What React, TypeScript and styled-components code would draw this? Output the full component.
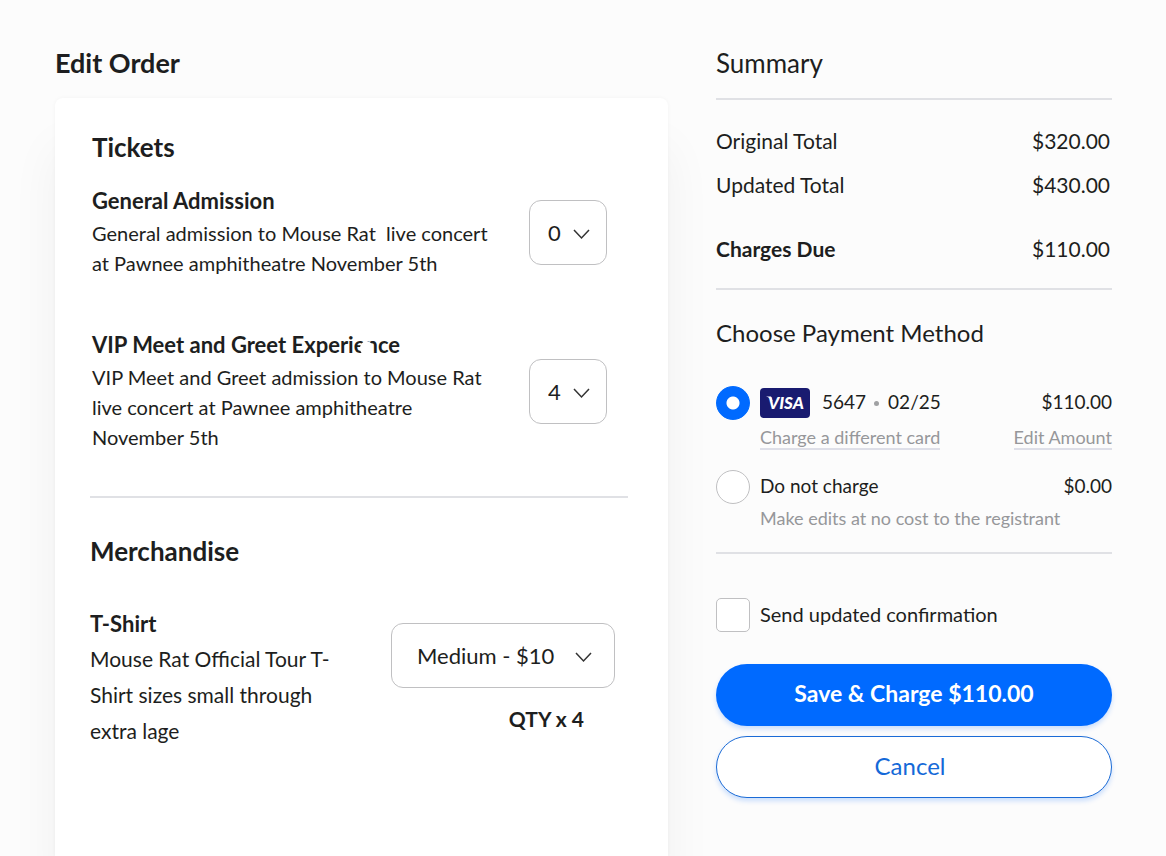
import React from "react";
import styled, { createGlobalStyle } from "styled-components";

const GlobalStyle = createGlobalStyle`
  *, *::before, *::after { box-sizing: border-box; }
  body {
    margin: 0;
    background: #fcfcfc;
    color: #1d1e20;
    font-family: Lato, "Noto Sans", sans-serif;
    font-size: 20px;
  }
  h1, h2, h3, p { margin: 0; }
`;

const Page = styled.div`
  display: grid;
  grid-template-columns: minmax(0, 1fr) 396px;
  gap: 48px;
  min-height: 100vh;
  padding: 47px 54px 0 55px;
  overflow: hidden;
`;

const Column = styled.section`
  display: flex;
  flex-direction: column;
`;

const Heading = styled.h1<{ $light?: boolean }>`
  margin-bottom: 19px;
  font-size: ${(p) => (p.$light ? 26 : 27)}px;
  font-weight: ${(p) => (p.$light ? 400 : 700)};
  line-height: 32px;
`;

const Card = styled.div`
  flex: 1;
  padding: 33px 40px 100px 35px;
  background: #fff;
  border-radius: 8px 8px 0 0;
  box-shadow: 0 0 4px rgba(0, 0, 0, 0.04), 0 50px 50px rgba(0, 0, 0, 0.05);
`;

const Group = styled.div<{ $right: number; $left?: number }>`
  padding: 0 ${(p) => p.$right}px 0 ${(p) => p.$left ?? 0}px;
`;

const GroupTitle = styled.h2`
  font-size: 26px;
  font-weight: 700;
  line-height: 32px;
`;

const Item = styled.div<{ $top: number; $align?: string }>`
  display: flex;
  justify-content: space-between;
  align-items: ${(p) => p.$align ?? "center"};
  gap: 20px;
  margin-top: ${(p) => p.$top}px;
`;

const ItemText = styled.div<{ $width: number }>`
  flex: 0 1 ${(p) => p.$width}px;
`;

const ItemName = styled.h3`
  margin-bottom: 2px;
  font-size: 22px;
  font-weight: 700;
  line-height: 30px;
`;

const ItemCopy = styled.p<{ $large?: boolean }>`
  font-size: ${(p) => (p.$large ? 21 : 20)}px;
  line-height: ${(p) => (p.$large ? 36 : 30)}px;
`;

const Worn = styled.span`
  position: relative;
  &::after {
    content: "";
    position: absolute;
    left: -5px;
    bottom: 2px;
    width: 13px;
    height: 15px;
    border-radius: 50%;
    background: #fff;
  }
`;

const SelectBox = styled.div<{ $wide?: boolean }>`
  position: relative;
  flex: none;
  width: ${(p) => (p.$wide ? 224 : 78)}px;
  select {
    display: block;
    width: 100%;
    height: 65px;
    padding: 0 0 0 ${(p) => (p.$wide ? 25 : 18)}px;
    appearance: none;
    background: #fff;
    border: 1px solid #c0c0c2;
    border-radius: 12px;
    color: inherit;
    font: 400 22px Lato, "Noto Sans", sans-serif;
  }
  svg {
    position: absolute;
    top: 29px;
    right: ${(p) => (p.$wide ? 23 : 17)}px;
    pointer-events: none;
  }
`;

const MerchControls = styled.div`
  display: flex;
  flex-direction: column;
  align-items: flex-end;
  padding-top: 14px;
`;

const Quantity = styled.p`
  padding: 16px 31px 0 0;
  font-size: 21px;
  font-weight: 700;
  line-height: 30px;
`;

const Divider = styled.hr<{ $top?: number; $bottom?: number }>`
  width: 100%;
  height: 2px;
  margin: ${(p) => p.$top ?? 0}px 0 ${(p) => p.$bottom ?? 0}px;
  border: 0;
  background: #e0e1e5;
`;

const Totals = styled.dl`
  display: grid;
  grid-template-columns: 1fr auto;
  margin: 0;
  padding-right: 2px;
  font-size: 21px;
  line-height: 44px;
  dd { margin: 0; }
`;

const DueLabel = styled.dt`
  padding-top: 20px;
  font-weight: 700;
`;

const DueValue = styled.dd`
  padding-top: 20px;
`;

const MethodTitle = styled.h2`
  font-size: 24px;
  font-weight: 400;
  line-height: 32px;
`;

const Option = styled.div<{ $top: number }>`
  display: grid;
  grid-template-columns: 34px 1fr auto;
  column-gap: 10px;
  row-gap: 2px;
  align-items: center;
  margin-top: ${(p) => p.$top}px;
  font-size: 19px;
`;

const Tick = styled.input`
  appearance: none;
  flex: none;
  width: 34px;
  height: 34px;
  margin: 0;
  background: #fff;
  border: 1px solid #c0c0c2;
  border-radius: ${(p) => (p.type === "radio" ? "50%" : "5px")};
  &[type="radio"]:checked {
    border-color: #006aff;
    background: radial-gradient(circle, #fff 6px, #006aff 7px);
  }
  &[type="checkbox"]:checked { background: #006aff; }
`;

const OptionLabel = styled.label`
  display: flex;
  align-items: center;
  line-height: 30px;
`;

const OptionText = styled.span`
  padding-bottom: 2px;
  line-height: 30px;
`;

const Amount = styled(OptionText)`
  justify-self: end;
`;

const CardNumber = styled(OptionText)`
  margin-left: 12px;
`;

const Dot = styled.span`
  width: 5px;
  height: 5px;
  margin: 0 9px 0 8px;
  border-radius: 50%;
  background: #a0a1a3;
`;

const Note = styled.p`
  grid-column: 2 / 4;
  color: #96979a;
  font-size: 18px;
  line-height: 24px;
`;

const TextLink = styled.a<{ $first?: boolean }>`
  grid-column: ${(p) => (p.$first ? 2 : 3)};
  justify-self: ${(p) => (p.$first ? "start" : "end")};
  margin-top: 4px;
  border-bottom: 2px solid #dedfe8;
  color: #96979a;
  font-size: 18px;
  line-height: 22px;
  text-decoration: none;
`;

const ConfirmLabel = styled.label`
  display: flex;
  align-items: center;
  gap: 10px;
  margin: 44px 0 32px;
  font-size: 20px;
`;

const Button = styled.button<{ $primary?: boolean }>`
  height: 62px;
  margin-bottom: 10px;
  padding: ${(p) => (p.$primary ? "0 0 5px" : "0 8px 4px 0")};
  border: ${(p) => (p.$primary ? "0" : "1px solid #1b6bd6")};
  border-radius: 31px;
  background: ${(p) => (p.$primary ? "#006aff" : "#fff")};
  box-shadow: 0 3px 5px rgba(0, 106, 255, 0.2);
  color: ${(p) => (p.$primary ? "#fff" : "#1469d8")};
  font: ${(p) => (p.$primary ? "700 23px" : "400 24px")} Lato, "Noto Sans", sans-serif;
`;

const Chevron = () => (
  <svg width="17" height="11" viewBox="0 0 17 11" fill="none" stroke="#333" strokeWidth="1.5" aria-hidden="true">
    <path d="M1 1 L8.5 9 L16 1" />
  </svg>
);

const Visa = () => (
  <svg width="50" height="30" viewBox="0 0 50 30" role="img" aria-label="Visa">
    <rect width="50" height="30" rx="4" fill="#191b70" />
    <text x="8" y="21" fill="#fff" fontFamily="Lato, sans-serif" fontSize="17" fontWeight="900" fontStyle="italic">
      VISA
    </text>
    <path d="M6 8.5 H11 L13 14 Q10.5 9.8 6 8.5Z" fill="#fff" />
  </svg>
);

interface DropdownProps {
  label: string;
  value: string;
  options: string[];
  wide?: boolean;
}

const Dropdown = ({ label, value, options, wide }: DropdownProps) => (
  <SelectBox $wide={wide}>
    <select aria-label={label} defaultValue={value}>
      {options.map((o) => (
        <option key={o}>{o}</option>
      ))}
    </select>
    <Chevron />
  </SelectBox>
);

const counts = ["0", "1", "2", "3", "4"];

export default function App() {
  return (
    <>
      <GlobalStyle />
      <Page>
        <Column>
          <Heading>Edit Order</Heading>
          <Card>
            <Group $left={2} $right={21}>
              <GroupTitle>Tickets</GroupTitle>
              <Item $top={23}>
                <ItemText $width={410}>
                  <ItemName>General Admission</ItemName>
                  <ItemCopy>General admission to Mouse Rat&nbsp; live concert at Pawnee amphitheatre November 5th</ItemCopy>
                </ItemText>
                <Dropdown label="General Admission quantity" value="0" options={counts} />
              </Item>
              <Item $top={52}>
                <ItemText $width={400}>
                  <ItemName>
                    VIP Meet and Greet Experie<Worn>n</Worn>ce
                  </ItemName>
                  <ItemCopy>VIP Meet and Greet admission to Mouse Rat live concert at Pawnee amphitheatre November 5th</ItemCopy>
                </ItemText>
                <Dropdown label="VIP quantity" value="4" options={counts} />
              </Item>
            </Group>
            <Divider $top={44} $bottom={37} />
            <Group $right={13}>
              <GroupTitle>Merchandise</GroupTitle>
              <Item $top={42} $align="flex-start">
                <ItemText $width={262}>
                  <ItemName>T-Shirt</ItemName>
                  <ItemCopy $large>Mouse Rat Official Tour T-Shirt sizes small through extra lage</ItemCopy>
                </ItemText>
                <MerchControls>
                  <Dropdown wide label="T-Shirt size" value="Medium - $10" options={["Small - $10", "Medium - $10"]} />
                  <Quantity>QTY x 4</Quantity>
                </MerchControls>
              </Item>
            </Group>
          </Card>
        </Column>

        <Column>
          <Heading as="h2" $light>Summary</Heading>
          <Divider $bottom={19} />
          <Totals>
            <dt>Original Total</dt>
            <dd>$320.00</dd>
            <dt>Updated Total</dt>
            <dd>$430.00</dd>
            <DueLabel>Charges Due</DueLabel>
            <DueValue>$110.00</DueValue>
          </Totals>
          <Divider $top={17} $bottom={27} />
          <MethodTitle>Choose Payment Method</MethodTitle>
          <Option $top={37}>
            <Tick type="radio" name="method" id="card" defaultChecked />
            <OptionLabel htmlFor="card">
              <Visa />
              <CardNumber>5647</CardNumber>
              <Dot />
              <OptionText>02/25</OptionText>
            </OptionLabel>
            <Amount>$110.00</Amount>
            <TextLink href="#card" $first>Charge a different card</TextLink>
            <TextLink href="#amount">Edit Amount</TextLink>
          </Option>
          <Option $top={20}>
            <Tick type="radio" name="method" id="free" />
            <OptionLabel htmlFor="free">
              <OptionText>Do not charge</OptionText>
            </OptionLabel>
            <Amount>$0.00</Amount>
            <Note>Make edits at no cost to the registrant</Note>
          </Option>
          <Divider $top={22} />
          <ConfirmLabel>
            <Tick type="checkbox" />
            <OptionText>Send updated confirmation</OptionText>
          </ConfirmLabel>
          <Button type="button" $primary>Save &amp; Charge $110.00</Button>
          <Button type="button">Cancel</Button>
        </Column>
      </Page>
    </>
  );
}
